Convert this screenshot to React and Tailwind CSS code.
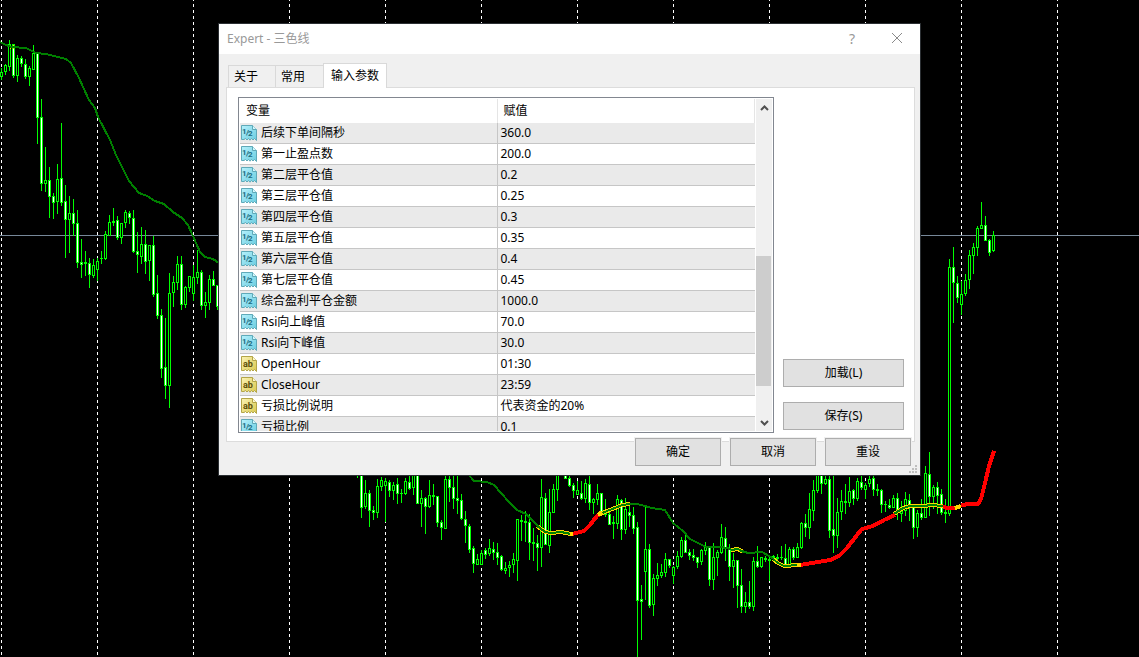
import React, { useState } from 'react';
import clsx from 'clsx';

// [x, high, low, bodyTop, bodyBottom, 1 = falling]
const CANDLES = [
    [1, 68, 79, 72, 76, 0], [5, 64, 74, 65, 71, 0], [9, 40, 70, 44, 66, 0], [13, 44, 77, 44, 75, 1],
    [17, 55, 81, 58, 75, 0], [21, 56, 66, 58, 63, 1], [25, 59, 78, 64, 76, 1], [29, 66, 85, 68, 76, 0],
    [33, 45, 69, 53, 69, 0], [37, 53, 143, 53, 117, 1], [41, 99, 190, 117, 183, 1], [45, 147, 191, 180, 183, 0],
    [49, 167, 217, 180, 196, 1], [53, 193, 218, 196, 202, 1], [57, 164, 213, 179, 201, 0], [61, 123, 205, 178, 202, 1],
    [65, 185, 257, 201, 219, 1], [69, 196, 252, 213, 219, 0], [73, 199, 235, 213, 223, 1], [77, 210, 267, 223, 262, 1],
    [81, 239, 277, 262, 264, 1], [85, 251, 275, 262, 263, 0], [89, 258, 287, 263, 274, 1], [93, 259, 277, 265, 275, 0],
    [97, 258, 280, 261, 269, 0], [101, 251, 263, 258, 258, 0], [105, 231, 259, 234, 258, 0], [109, 215, 235, 222, 235, 0],
    [113, 208, 225, 221, 222, 0], [117, 216, 239, 220, 237, 1], [121, 223, 243, 223, 237, 0], [125, 210, 227, 212, 222, 0],
    [129, 211, 223, 213, 217, 1], [133, 210, 252, 218, 251, 1], [137, 232, 272, 251, 254, 1], [141, 227, 263, 244, 256, 0],
    [145, 230, 273, 244, 261, 1], [149, 245, 280, 245, 260, 0], [153, 236, 296, 245, 294, 1], [157, 275, 318, 293, 315, 1],
    [161, 309, 377, 315, 368, 1], [165, 318, 398, 367, 385, 1], [169, 273, 407, 293, 385, 0], [173, 276, 306, 282, 292, 0],
    [177, 256, 289, 264, 282, 0], [181, 256, 309, 264, 304, 1], [185, 286, 307, 287, 304, 0], [189, 276, 291, 276, 287, 0],
    [193, 265, 300, 277, 293, 0], [197, 250, 283, 272, 277, 0], [201, 270, 309, 272, 305, 1], [205, 292, 317, 302, 305, 0],
    [209, 275, 309, 279, 302, 0], [213, 271, 285, 279, 285, 1], [217, 285, 309, 285, 306, 1],
    [357, 460, 477, 460, 460, 0], [361, 470, 517, 470, 507, 1], [365, 480, 508, 493, 506, 0], [369, 490, 526, 493, 510, 1],
    [373, 506, 519, 510, 512, 1], [377, 479, 517, 486, 512, 0], [381, 477, 490, 480, 486, 0], [385, 478, 521, 481, 485, 0],
    [389, 480, 496, 482, 490, 1], [393, 482, 499, 485, 490, 0], [397, 478, 503, 484, 493, 1], [401, 489, 502, 493, 493, 0],
    [405, 478, 494, 481, 493, 0], [409, 470, 489, 482, 488, 1], [413, 470, 494, 470, 487, 0], [417, 470, 503, 470, 503, 1],
    [421, 490, 526, 498, 503, 0], [425, 497, 533, 498, 506, 1], [429, 480, 507, 495, 506, 0], [433, 484, 504, 495, 496, 0],
    [437, 496, 526, 496, 522, 1], [441, 520, 539, 522, 527, 1], [445, 470, 528, 479, 528, 0], [449, 470, 501, 479, 487, 1],
    [453, 470, 508, 487, 498, 1], [457, 470, 513, 498, 500, 1], [461, 494, 519, 500, 518, 1], [465, 511, 542, 519, 525, 1],
    [469, 524, 552, 526, 549, 1], [473, 546, 572, 548, 563, 1], [477, 554, 564, 559, 564, 0], [481, 550, 564, 553, 564, 0],
    [485, 548, 558, 550, 554, 1], [489, 539, 555, 548, 553, 0], [493, 542, 559, 549, 552, 1], [497, 543, 564, 552, 557, 1],
    [501, 555, 570, 556, 569, 1], [505, 562, 573, 568, 570, 0], [509, 561, 576, 565, 567, 0], [513, 553, 572, 559, 564, 0],
    [517, 519, 580, 519, 560, 0], [521, 515, 540, 520, 521, 0], [525, 511, 541, 521, 522, 0], [529, 514, 559, 522, 542, 1],
    [533, 528, 560, 542, 543, 0], [537, 535, 570, 543, 547, 1], [541, 479, 566, 497, 547, 0], [545, 493, 544, 498, 544, 1],
    [549, 489, 552, 512, 545, 0], [553, 484, 512, 489, 512, 0], [557, 470, 500, 470, 489, 0], [565, 470, 478, 470, 478, 1],
    [569, 475, 486, 478, 485, 1], [573, 483, 497, 485, 490, 1], [577, 481, 494, 490, 494, 0], [581, 481, 499, 493, 498, 1],
    [585, 479, 502, 483, 498, 0], [589, 470, 509, 484, 502, 1], [593, 498, 513, 499, 502, 0], [597, 484, 504, 493, 499, 0],
    [601, 493, 515, 493, 513, 1], [605, 499, 516, 512, 514, 0], [609, 510, 524, 514, 524, 1], [613, 516, 538, 522, 523, 0],
    [617, 495, 528, 499, 523, 0], [621, 499, 539, 500, 529, 1], [625, 498, 533, 509, 529, 0], [629, 506, 526, 512, 515, 1],
    [633, 507, 533, 515, 528, 1], [637, 522, 656, 527, 600, 1], [641, 585, 639, 599, 601, 1], [645, 507, 599, 549, 571, 0],
    [649, 544, 607, 549, 605, 1], [653, 574, 615, 578, 604, 0], [657, 563, 585, 575, 578, 0], [661, 564, 577, 572, 575, 0],
    [665, 553, 576, 559, 572, 0], [669, 559, 567, 559, 565, 1], [673, 566, 583, 567, 575, 0], [677, 551, 568, 556, 566, 0],
    [681, 537, 557, 540, 556, 0], [685, 535, 552, 540, 552, 1], [689, 549, 559, 552, 555, 1], [693, 549, 560, 555, 557, 1],
    [697, 557, 567, 557, 562, 1], [701, 549, 564, 550, 561, 0], [705, 542, 554, 547, 550, 0], [709, 547, 585, 547, 579, 1],
    [713, 543, 589, 557, 579, 0], [717, 550, 575, 552, 557, 0], [721, 524, 553, 537, 552, 0], [725, 527, 560, 538, 548, 1],
    [729, 544, 580, 549, 566, 1], [733, 553, 587, 560, 566, 0], [737, 560, 607, 560, 585, 1], [741, 569, 612, 585, 606, 1],
    [745, 592, 612, 602, 606, 0], [749, 581, 608, 602, 606, 1], [753, 557, 610, 561, 606, 0], [757, 546, 567, 561, 566, 1],
    [761, 557, 567, 557, 566, 0], [765, 556, 561, 558, 559, 0], [769, 556, 580, 559, 560, 0], [773, 555, 557, 556, 557, 0],
    [777, 554, 561, 557, 558, 0], [781, 546, 559, 557, 557, 0], [785, 544, 564, 558, 564, 1], [789, 547, 565, 549, 565, 0],
    [793, 547, 559, 549, 557, 1], [797, 543, 557, 547, 557, 0], [801, 522, 548, 523, 547, 0], [805, 514, 536, 523, 527, 1],
    [809, 493, 538, 509, 527, 0], [813, 480, 520, 490, 510, 0], [817, 470, 492, 470, 490, 0], [821, 470, 493, 470, 483, 1],
    [825, 470, 484, 479, 483, 0], [829, 470, 537, 479, 530, 1], [833, 470, 552, 529, 535, 1], [837, 498, 547, 512, 535, 0],
    [841, 490, 519, 501, 511, 0], [845, 484, 513, 501, 502, 0], [849, 477, 506, 491, 502, 0], [853, 489, 504, 490, 498, 1],
    [857, 478, 500, 481, 498, 0], [861, 476, 489, 482, 487, 1], [865, 483, 498, 485, 489, 0], [869, 476, 486, 479, 483, 0],
    [873, 470, 495, 478, 489, 1], [877, 484, 495, 489, 490, 0], [881, 489, 512, 490, 504, 1], [885, 501, 511, 504, 504, 0],
    [889, 499, 508, 505, 507, 1], [893, 495, 507, 498, 507, 0], [897, 493, 519, 498, 512, 1], [901, 501, 521, 511, 513, 0],
    [905, 492, 515, 499, 510, 0], [909, 494, 520, 500, 507, 1], [913, 504, 538, 507, 527, 1], [917, 510, 536, 513, 527, 0],
    [921, 499, 519, 513, 517, 1], [925, 466, 517, 473, 517, 0], [929, 452, 515, 474, 496, 1], [933, 485, 508, 487, 496, 0],
    [937, 482, 513, 487, 495, 1], [941, 489, 514, 494, 512, 1], [945, 499, 522, 512, 513, 0], [949, 259, 515, 267, 513, 0],
    [953, 247, 322, 267, 282, 1], [957, 276, 302, 283, 297, 1], [961, 281, 314, 294, 304, 0], [965, 274, 295, 280, 293, 0],
    [969, 250, 288, 255, 279, 0], [973, 243, 273, 247, 255, 0], [977, 226, 255, 228, 247, 0], [981, 202, 228, 225, 228, 0],
    [985, 216, 240, 225, 240, 1], [989, 239, 255, 240, 252, 1], [993, 231, 251, 235, 250, 0],
];

const GREEN_LINES = [
    '0,42 4,44 11,47 26,48 36,53 46,54 66,59 71,63 79,78 89,100 95,108 98,117 110,140 116,155 129,181 139,193 147,196 155,201 164,204 173,212 182,218 188,225 193,236 200,252 205,257 213,259 219,263',
    '468,474 474,481 487,482 494,485 501,493 509,502 517,510 526,514 538,526 545,532',
    '629,504 637,504 652,508 665,510 673,523 683,531 690,539 706,547 721,547 731,549',
    '742,551 748,553 762,552 769,556 774,559',
];

const YELLOW_LINES = [
    '537,526 545,532 551,533 561,532 571,534',
    '600,514 607,511 615,508 622,505 630,504',
    '731,550 738,549 743,552',
    '773,559 778,563 784,566 799,565',
    '894,514 903,508 910,506 924,506 931,505 943,506',
];

const RED_LINES = [
    '572,534 584,531 590,525 597,516 600,514',
    '800,565 812,563 830,560 839,556 847,548 857,535 862,529 873,526 884,520 895,515',
    '943,507 948,508 956,508',
    '961,505 970,504 978,504 981,499 985,483 989,466 994,451',
];

const ROWS = [
    { type: 'num', name: '后续下单间隔秒', value: '360.0' },
    { type: 'num', name: '第一止盈点数', value: '200.0' },
    { type: 'num', name: '第二层平仓值', value: '0.2' },
    { type: 'num', name: '第三层平仓值', value: '0.25' },
    { type: 'num', name: '第四层平仓值', value: '0.3' },
    { type: 'num', name: '第五层平仓值', value: '0.35' },
    { type: 'num', name: '第六层平仓值', value: '0.4' },
    { type: 'num', name: '第七层平仓值', value: '0.45' },
    { type: 'num', name: '综合盈利平仓金额', value: '1000.0' },
    { type: 'num', name: 'Rsi向上峰值', value: '70.0' },
    { type: 'num', name: 'Rsi向下峰值', value: '30.0' },
    { type: 'str', name: 'OpenHour', value: '01:30' },
    { type: 'str', name: 'CloseHour', value: '23:59' },
    { type: 'str', name: '亏损比例说明', value: '代表资金的20%' },
    { type: 'num', name: '亏损比例', value: '0.1' },
];

const GRID_X = Array.from({ length: 20 }, (_, i) => 1 + i * 96);

function Chart() {
    return (
        <svg className="absolute inset-0 w-full h-full" shapeRendering="crispEdges" aria-hidden="true">
            {GRID_X.map((x) => (
                <line key={x} x1={x + 0.5} x2={x + 0.5} y1="-2" y2="2000" stroke="#fff" strokeDasharray="3 3" />
            ))}
            <rect x="0" y="235" width="100%" height="1" fill="#778899" />
            {CANDLES.map(([x, high, low, top, bottom, down]) => (
                <g key={x}>
                    <rect x={x} y={high} width="1" height={low - high + 1} fill="#00ff00" />
                    <rect x={x - 1} y={top} width="3" height={bottom - top + 1} fill="#00ff00" />
                    {bottom - top > 1 && (
                        <rect x={x} y={top + 1} width="1" height={bottom - top - 1} fill={down ? '#fff' : '#000'} />
                    )}
                </g>
            ))}
            <g fill="none" strokeLinejoin="round">
                <path d="M9 45l5 4M10 49l4-4" stroke="#ffd700" />
                {YELLOW_LINES.map((p) => (
                    <g key={p}>
                        <polyline points={p} stroke="#ffd700" strokeWidth="4" />
                        <polyline points={p} stroke="#008000" strokeWidth="2" />
                    </g>
                ))}
                {GREEN_LINES.map((p) => <polyline key={p} points={p} stroke="#008000" strokeWidth="2" />)}
                {RED_LINES.map((p) => <polyline key={p} points={p} stroke="#ff0000" strokeWidth="4" />)}
                <path d="M570 534h3M598 515l4-3M797 565h4M955 508l6-2" stroke="#ffd700" strokeWidth="4" />
            </g>
        </svg>
    );
}

function TypeIcon({ type }) {
    const isNum = type === 'num';
    const edge = isNum ? '#5fa9b8' : '#b3a548';
    return (
        <svg width="16" height="16" viewBox="0 0 16 16" className="shrink-0" aria-hidden="true">
            <defs>
                <linearGradient id={isNum ? 'gNum' : 'gStr'} x1="0" y1="0" x2="1" y2="1">
                    <stop offset="0" stopColor={isNum ? '#b5f1fc' : '#fbf3b4'} />
                    <stop offset="1" stopColor={isNum ? '#6accdf' : '#d9c84e'} />
                </linearGradient>
            </defs>
            <path
                d="M.5 .5H11.5L15.5 4.500V15.500L13.500 13.500L12 15L10.500 13.500L9 15.200L7.500 13.500L6 15L4.500 13.500L3 14.500H.5Z"
                fill={isNum ? 'url(#gNum)' : 'url(#gStr)'}
                stroke={edge}
            />
            <path d="M11.500 .5V4.500H15.500" fill={isNum ? '#d4f7fc' : '#fdf8cf'} stroke={edge} />
            {isNum ? (
                <text y="10" fontSize="8" fontWeight="700" fontFamily="Roboto, sans-serif" fill="#1b6b80">
                    <tspan x="1" y="9">1</tspan>
                    <tspan x="5" y="10">/</tspan>
                    <tspan x="7" y="11">2</tspan>
                </text>
            ) : (
                <text x="2" y="11" fontSize="9" fontWeight="700" fontFamily="Roboto, sans-serif" fill="#5c4f0a">ab</text>
            )}
        </svg>
    );
}

function PushButton({ children, className }) {
    return (
        <button
            type="button"
            className={clsx('h-7 border border-[#adadad] bg-[#e1e1e1] text-center hover:bg-[#e5f1fb] hover:border-[#0078d7]', className)}
        >
            {children}
        </button>
    );
}

function ScrollBar() {
    return (
        <div className="w-4 my-px mr-px ml-px shrink-0 flex flex-col bg-[#f0f0f0]">
            <button type="button" aria-label="向上滚动" className="h-[17px] flex items-center justify-center">
                <svg width="9" height="6" viewBox="0 0 9 6"><path d="M1 5L4.500 1.500L8 5" fill="none" stroke="#505050" strokeWidth="2" /></svg>
            </button>
            <div className="flex-1 flex flex-col pr-px">
                <div className="grow-[140]" />
                <div className="grow-[130] bg-[#cdcdcd]" />
                <div className="grow-[28]" />
            </div>
            <button type="button" aria-label="向下滚动" className="h-[17px] flex items-center justify-center">
                <svg width="9" height="6" viewBox="0 0 9 6"><path d="M1 1L4.500 4.500L8 1" fill="none" stroke="#505050" strokeWidth="2" /></svg>
            </button>
        </div>
    );
}

function ParamTable() {
    return (
        <div className="w-[536px] h-[336px] shrink-0 flex border border-[#828790] bg-white">
            <div className="flex-1 mt-px mb-px ml-px overflow-hidden">
                <table className="w-full table-fixed border-separate border-spacing-0 text-left">
                    <colgroup>
                        <col className="w-1/2" />
                        <col className="w-1/2" />
                    </colgroup>
                    <thead>
                        <tr className="h-6">
                            <th className="p-0 pl-1.5 font-normal border-r border-[#e5e5e5]">变量</th>
                            <th className="p-0 pl-1.5 font-normal border-r border-[#e5e5e5]">赋值</th>
                        </tr>
                    </thead>
                    <tbody>
                        {ROWS.map((row) => (
                            <tr key={row.name} className="h-[21px] odd:bg-[#eaeaea]">
                                <td className="p-0 pl-px border-r border-b border-[#c6c6c6]">
                                    <div className="flex items-center gap-1 h-5">
                                        <TypeIcon type={row.type} />
                                        <span>{row.name}</span>
                                    </div>
                                </td>
                                <td className="p-0 pl-[3px] border-b border-[#c6c6c6]">{row.value}</td>
                            </tr>
                        ))}
                    </tbody>
                </table>
            </div>
            <ScrollBar />
        </div>
    );
}

function Tab({ active, onClick, children, className }) {
    return (
        <button
            type="button"
            role="tab"
            aria-selected={active}
            onClick={onClick}
            className={clsx(
                'border-t border-r border-[#d9d9d9] text-left',
                active ? 'h-[25px] -mb-px -ml-px border-l bg-white px-[7px]' : 'h-[22px] bg-[#f0f0f0] first:border-l px-[5px]',
                className
            )}
        >
            {children}
        </button>
    );
}

function ExpertDialog() {
    const [tab, setTab] = useState(2);

    return (
        <div
            role="dialog"
            aria-label="Expert - 三色线"
            className="absolute left-[218px] top-[23px] w-[703px] border border-[#2b2f33] bg-[#f0f0f0] text-black"
        >
            <div className="h-[30px] pl-2 flex items-center bg-white text-[#999999]">
                <h1 className="flex-1">Expert - 三色线</h1>
                <button type="button" className="w-11 h-full text-sm">?</button>
                <button type="button" aria-label="关闭" className="w-[46px] h-full flex items-center justify-center">
                    <svg width="12" height="12" viewBox="0 0 12 12"><path d="M1 0L11 10M11 0L1 10" stroke="#8a8a8a" fill="none" /></svg>
                </button>
            </div>

            <div className="px-[7px] pt-[9px]">
                <div role="tablist" className="flex items-end pl-0.5 relative">
                    <Tab active={tab === 0} onClick={() => setTab(0)} className="w-12">关于</Tab>
                    <Tab active={tab === 1} onClick={() => setTab(1)} className="w-12">常用</Tab>
                    <Tab active={tab === 2} onClick={() => setTab(2)} className="w-16">输入参数</Tab>
                </div>
                <div className="flex gap-[9px] h-[355px] mr-[-2px] border border-[#dcdcdc] bg-white pl-[11px] pt-[9px]">
                    <ParamTable />
                    <div className="flex flex-col justify-end gap-[15px] w-[121px] pb-[11px]">
                        <PushButton>加载(L)</PushButton>
                        <PushButton>保存(S)</PushButton>
                    </div>
                </div>
            </div>

            {/* the bottom buttons ride over the lower edge of the tab page */}
            <div className="relative -mt-1 pb-[9px] pr-[9px] flex justify-end gap-[9px]">
                <PushButton className="w-[86px] outline outline-[#f0f0f0]">确定</PushButton>
                <PushButton className="w-[86px] outline outline-[#f0f0f0]">取消</PushButton>
                <PushButton className="w-[86px] outline outline-[#f0f0f0]">重设</PushButton>
                <svg width="8" height="8" viewBox="0 0 8 8" className="absolute right-[3px] bottom-0.5" aria-hidden="true">
                    <path d="M6 0h2v2h-2zM6 3h2v2h-2zM3 3h2v2h-2zM6 6h2v2h-2zM3 6h2v2h-2zM0 6h2v2h-2z" fill="#bfbfbf" />
                </svg>
            </div>
        </div>
    );
}

export default function App() {
    return (
        <main className="relative min-h-screen overflow-hidden bg-black text-xs font-['Noto_Sans','Noto_Sans_CJK_SC',sans-serif]">
            <Chart />
            <ExpertDialog />
        </main>
    );
}
